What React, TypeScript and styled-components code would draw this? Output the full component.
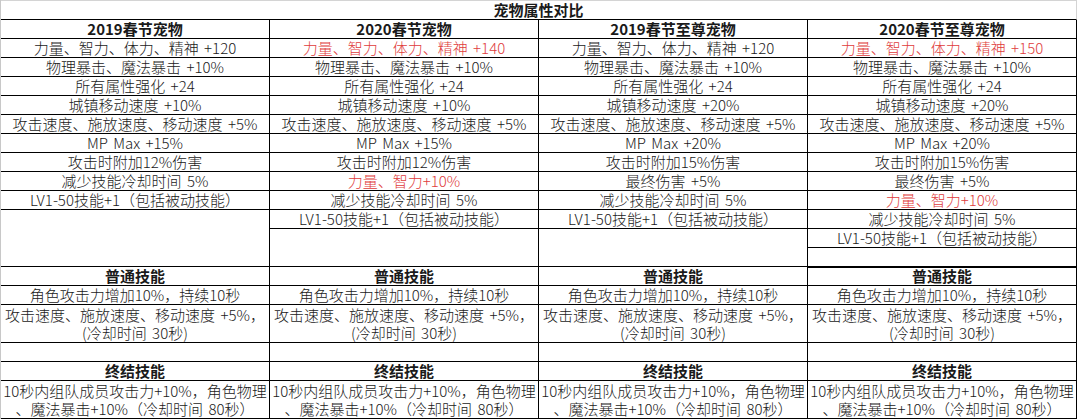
import styled, { createGlobalStyle } from 'styled-components';

type Line = { text: string; red?: boolean };

const columns: { title: string; stats: Line[] }[] = [
  {
    title: '2019春节宠物',
    stats: [
      { text: '力量、智力、体力、精神 +120' },
      { text: '物理暴击、魔法暴击 +10%' },
      { text: '所有属性强化 +24' },
      { text: '城镇移动速度 +10%' },
      { text: '攻击速度、施放速度、移动速度 +5%' },
      { text: 'MP Max +15%' },
      { text: '攻击时附加12%伤害' },
      { text: '减少技能冷却时间 5%' },
      { text: 'LV1-50技能+1（包括被动技能）' },
    ],
  },
  {
    title: '2020春节宠物',
    stats: [
      { text: '力量、智力、体力、精神 +140', red: true },
      { text: '物理暴击、魔法暴击 +10%' },
      { text: '所有属性强化 +24' },
      { text: '城镇移动速度 +10%' },
      { text: '攻击速度、施放速度、移动速度 +5%' },
      { text: 'MP Max +15%' },
      { text: '攻击时附加12%伤害' },
      { text: '力量、智力+10%', red: true },
      { text: '减少技能冷却时间 5%' },
      { text: 'LV1-50技能+1（包括被动技能）' },
    ],
  },
  {
    title: '2019春节至尊宠物',
    stats: [
      { text: '力量、智力、体力、精神 +120' },
      { text: '物理暴击、魔法暴击 +10%' },
      { text: '所有属性强化 +24' },
      { text: '城镇移动速度 +20%' },
      { text: '攻击速度、施放速度、移动速度 +5%' },
      { text: 'MP Max +20%' },
      { text: '攻击时附加15%伤害' },
      { text: '最终伤害 +5%' },
      { text: '减少技能冷却时间 5%' },
      { text: 'LV1-50技能+1（包括被动技能）' },
    ],
  },
  {
    title: '2020春节至尊宠物',
    stats: [
      { text: '力量、智力、体力、精神 +150', red: true },
      { text: '物理暴击、魔法暴击 +10%' },
      { text: '所有属性强化 +24' },
      { text: '城镇移动速度 +20%' },
      { text: '攻击速度、施放速度、移动速度 +5%' },
      { text: 'MP Max +20%' },
      { text: '攻击时附加15%伤害' },
      { text: '最终伤害 +5%' },
      { text: '力量、智力+10%', red: true },
      { text: '减少技能冷却时间 5%' },
      { text: 'LV1-50技能+1（包括被动技能）' },
      { text: '' },
    ],
  },
];

const skillRows: { lines: string[]; bold?: boolean; span?: number }[] = [
  { lines: ['普通技能'], bold: true },
  { lines: ['角色攻击力增加10%，持续10秒'] },
  { lines: ['攻击速度、施放速度、移动速度 +5%，', '(冷却时间 30秒)'], span: 2 },
  { lines: [''] },
  { lines: ['终结技能'], bold: true },
  { lines: ['10秒内组队成员攻击力+10%，角色物理', '、魔法暴击+10%（冷却时间 80秒）'], span: 2 },
];

const App = () => {
  return (
    <>
      <GlobalStyle />
      <Sheet>
        <TitleRow>宠物属性对比</TitleRow>
        <Grid>
          {columns.map((col) => (
            <Cell key={col.title} bold>
              {col.title}
            </Cell>
          ))}
          {columns.map((col) => (
            <StatColumn key={col.title + '-stats'}>
              {col.stats.map((s, i) => (
                <Cell key={i} red={s.red}>
                  {s.text}
                </Cell>
              ))}
              <Filler />
            </StatColumn>
          ))}
          {skillRows.map((row, r) =>
            columns.map((col) => (
              <Cell key={col.title + r} bold={row.bold} span={row.span}>
                {row.lines.map((l, i) => (
                  <CellLine key={i}>{l}</CellLine>
                ))}
              </Cell>
            ))
          )}
        </Grid>
      </Sheet>
    </>
  );
};

export default App;

const GlobalStyle = createGlobalStyle`
  body {
    margin: 0;
    background: #fff;
    font-family: "Noto Sans CJK SC", "Noto Sans", sans-serif;
  }
`;

const Sheet = styled.div`
  width: 1077px;
  height: 419px;
  box-sizing: border-box;
  border-left: 1px solid #c8c8c8;
  overflow: hidden;
  color: #1a1a1a;
  font-size: 15px;
  font-weight: 300;
  word-spacing: 2px;
`;

const TitleRow = styled.div`
  height: 20px;
  box-sizing: border-box;
  border-top: 1px solid #d4d4d4;
  border-right: 1px solid #d4d4d4;
  border-bottom: 1px solid #000;
  display: flex;
  align-items: center;
  justify-content: center;
  font-weight: 700;
  line-height: 18px;
`;

const Grid = styled.div`
  display: grid;
  grid-template-columns: repeat(4, 269px);
`;

const StatColumn = styled.div`
  height: 228px;
  display: flex;
  flex-direction: column;
`;

const Cell = styled.div<{ bold?: boolean; red?: boolean; span?: number }>`
  flex: none;
  height: ${({ span }) => (span ?? 1) * 19}px;
  box-sizing: border-box;
  border-right: 1px solid #000;
  border-bottom: 1px solid #000;
  display: flex;
  flex-direction: column;
  align-items: center;
  justify-content: center;
  line-height: 18px;
  white-space: nowrap;
  font-weight: ${({ bold }) => (bold ? 700 : 300)};
  color: ${({ red }) => (red ? '#e03c3c' : '#1a1a1a')};
`;

const CellLine = styled.span`
  display: block;
  line-height: 18px;
`;

const Filler = styled.div`
  flex: 1;
  border-right: 1px solid #000;
  border-bottom: 1px solid #000;
`;
